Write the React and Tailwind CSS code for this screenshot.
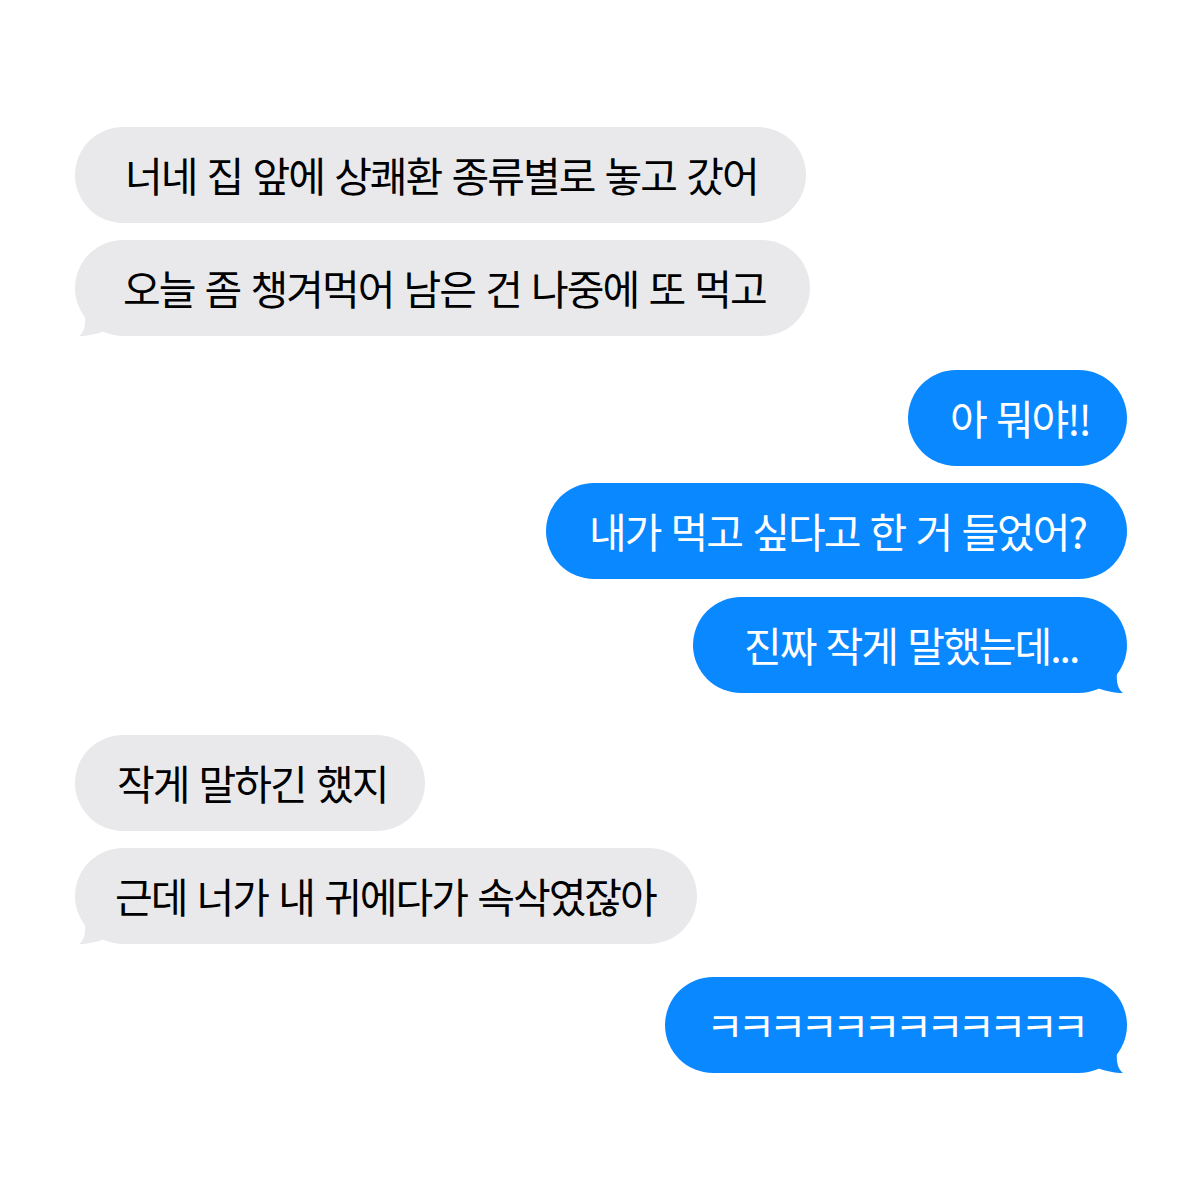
import React from "react";

const GRAY = "#e9e9eb";
const BLUE = "#0a88ff";

function Tail({ side }) {
  const color = side === "left" ? GRAY : BLUE;
  return (
    <svg
      width="40"
      height="30"
      viewBox="0 0 40 30"
      className={
        side === "left"
          ? "absolute left-0 bottom-0"
          : "absolute right-0 bottom-0 -scale-x-100"
      }
    >
      <path
        d="M4,30 C9,26 11,20 10,8 L32,8 L32,24 C22,28 12,30 4,30 Z"
        fill={color}
      />
    </svg>
  );
}

function Bubble({ side, text, tail, mt, w, pl, track = "tracking-[-2px]" }) {
  const isLeft = side === "left";
  return (
    <div className={`flex ${isLeft ? "justify-start" : "justify-end"} ${mt}`}>
      <div
        className={`relative h-[96px] rounded-full flex items-center text-[41px] ${track} [word-spacing:3px] whitespace-nowrap ${w} ${pl} ${
          isLeft ? "bg-[#e9e9eb] text-black" : "bg-[#0a88ff] text-white"
        }`}
      >
        {tail && <Tail side={side} />}
        <span className="relative">{text}</span>
      </div>
    </div>
  );
}

export default function App() {
  return (
    <div
      className="w-[1200px] h-[1200px] bg-white pl-[75px] pr-[73px] pt-[127px]"
      style={{ fontFamily: '"Noto Sans CJK KR", "Noto Sans", sans-serif' }}
    >
      <Bubble side="left" text="너네 집 앞에 상쾌환 종류별로 놓고 갔어" mt="mt-0" w="w-[731px]" pl="pl-[50px]" />
      <Bubble side="left" text="오늘 좀 챙겨먹어 남은 건 나중에 또 먹고" tail mt="mt-[17px]" w="w-[735px]" pl="pl-[48px]" />
      <Bubble side="right" text="아 뭐야!!" mt="mt-[34px]" w="w-[219px]" pl="pl-[42px]" />
      <Bubble side="right" text="내가 먹고 싶다고 한 거 들었어?" mt="mt-[17px]" w="w-[581px]" pl="pl-[43px]" />
      <Bubble side="right" text="진짜 작게 말했는데..." tail mt="mt-[18px]" w="w-[434px]" pl="pl-[51px]" />
      <Bubble side="left" text="작게 말하긴 했지" mt="mt-[42px]" w="w-[350px]" pl="pl-[42px]" />
      <Bubble side="left" text="근데 너가 내 귀에다가 속삭였잖아" tail mt="mt-[17px]" w="w-[622px]" pl="pl-[40px]" />
      <Bubble side="right" text="ㅋㅋㅋㅋㅋㅋㅋㅋㅋㅋㅋㅋ" tail mt="mt-[33px]" w="w-[462px]" pl="pl-[41px]" track="tracking-[-6.3px]" />
    </div>
  );
}
